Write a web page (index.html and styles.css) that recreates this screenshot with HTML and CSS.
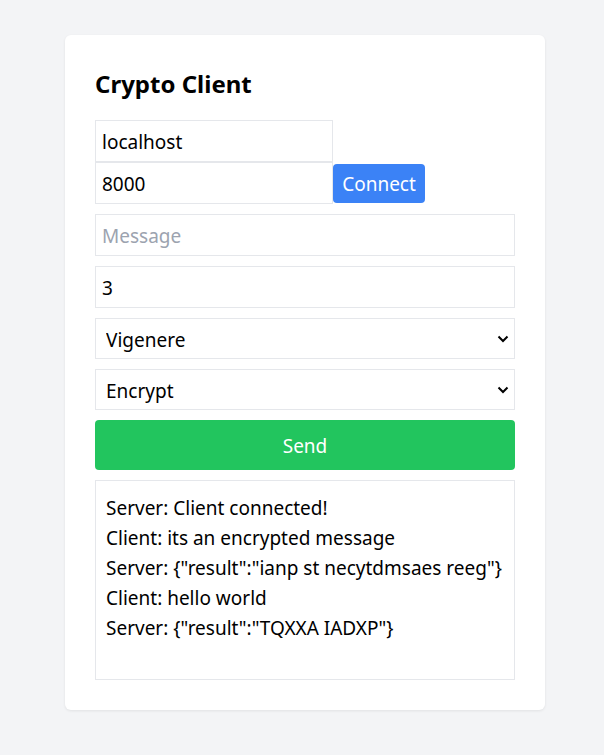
FILE: index.html
```html
<!DOCTYPE html>
<html lang="en">
<head>
<meta charset="utf-8">
<title>Crypto Client</title>
<link rel="stylesheet" href="styles.css">
</head>
<body>
<main class="card">
  <h2 class="title">Crypto Client</h2>
  <div class="conn">
    <input class="field host" type="text" value="localhost">
    <div class="port-row">
      <input class="field port" type="text" value="8000">
      <button class="btn btn-blue">Connect</button>
    </div>
  </div>
  <input class="field full" type="text" placeholder="Message">
  <input class="field full" type="text" value="3">
  <select class="field full sel">
    <option>Vigenere</option>
  </select>
  <select class="field full sel">
    <option>Encrypt</option>
  </select>
  <button class="btn btn-green">Send</button>
  <div class="log">
    <div class="line">Server: Client connected!</div>
    <div class="line">Client: its an encrypted message</div>
    <div class="line">Server: {"result":"ianp st necytdmsaes reeg"}</div>
    <div class="line">Client: hello world</div>
    <div class="line">Server: {"result":"TQXXA IADXP"}</div>
  </div>
</main>
</body>
</html>
```

FILE: styles.css
```css
html, body {
  margin: 0;
  padding: 0;
  background: #f3f4f6;
}
body {
  font-family: "Noto Sans", "Open Sans", sans-serif;
  color: #000;
  padding: 35px 0 45px 65px;
}
.card {
  width: 420px;
  background: #fff;
  border-radius: 6px;
  padding: 30px;
  box-shadow: 0 1px 3px rgba(0,0,0,0.08);
  display: flex;
  flex-direction: column;
}
.title {
  margin: 0;
  font-size: 24px;
  font-weight: 700;
  line-height: 32px;
  padding-top: 3px;
  margin-bottom: 20px;
}
.field {
  box-sizing: border-box;
  height: 42px;
  border: 1px solid #e5e7eb;
  font-family: inherit;
  font-size: 19px;
  color: #000;
  padding: 2px 6px 0;
  background: #fff;
  border-radius: 0;
  outline: none;
  margin: 0;
}
.field::placeholder {
  color: #9ca3af;
}
.conn {
  display: flex;
  flex-direction: column;
  margin-bottom: 10px;
}
.host, .port {
  width: 238px;
}
.port-row {
  display: flex;
  align-items: center;
}
.full {
  width: 100%;
  margin-bottom: 10px;
}
.sel {
  height: 41px;
  appearance: none;
  -webkit-appearance: none;
  padding: 2px 10px 0;
  background-image: url("data:image/svg+xml;utf8,<svg xmlns='http://www.w3.org/2000/svg' width='12' height='8' viewBox='0 0 12 8'><path d='M1.5 1.5 L6 6 L10.5 1.5' fill='none' stroke='black' stroke-width='2'/></svg>");
  background-repeat: no-repeat;
  background-position: right 5px center;
}
.btn {
  font-family: inherit;
  font-size: 19px;
  border: none;
  color: #fff;
  border-radius: 4px;
  cursor: pointer;
}
.btn-blue {
  background: #3b82f6;
  height: 39px;
  width: 92px;
  padding: 1px 0 0;
}
.btn-green {
  background: #22c55e;
  height: 50px;
  width: 100%;
  padding-top: 2px;
  margin-bottom: 10px;
}
.log {
  box-sizing: border-box;
  height: 200px;
  border: 1px solid #e5e7eb;
  padding: 12px 10px;
  font-size: 19px;
}
.line {
  line-height: 30px;
}
```
